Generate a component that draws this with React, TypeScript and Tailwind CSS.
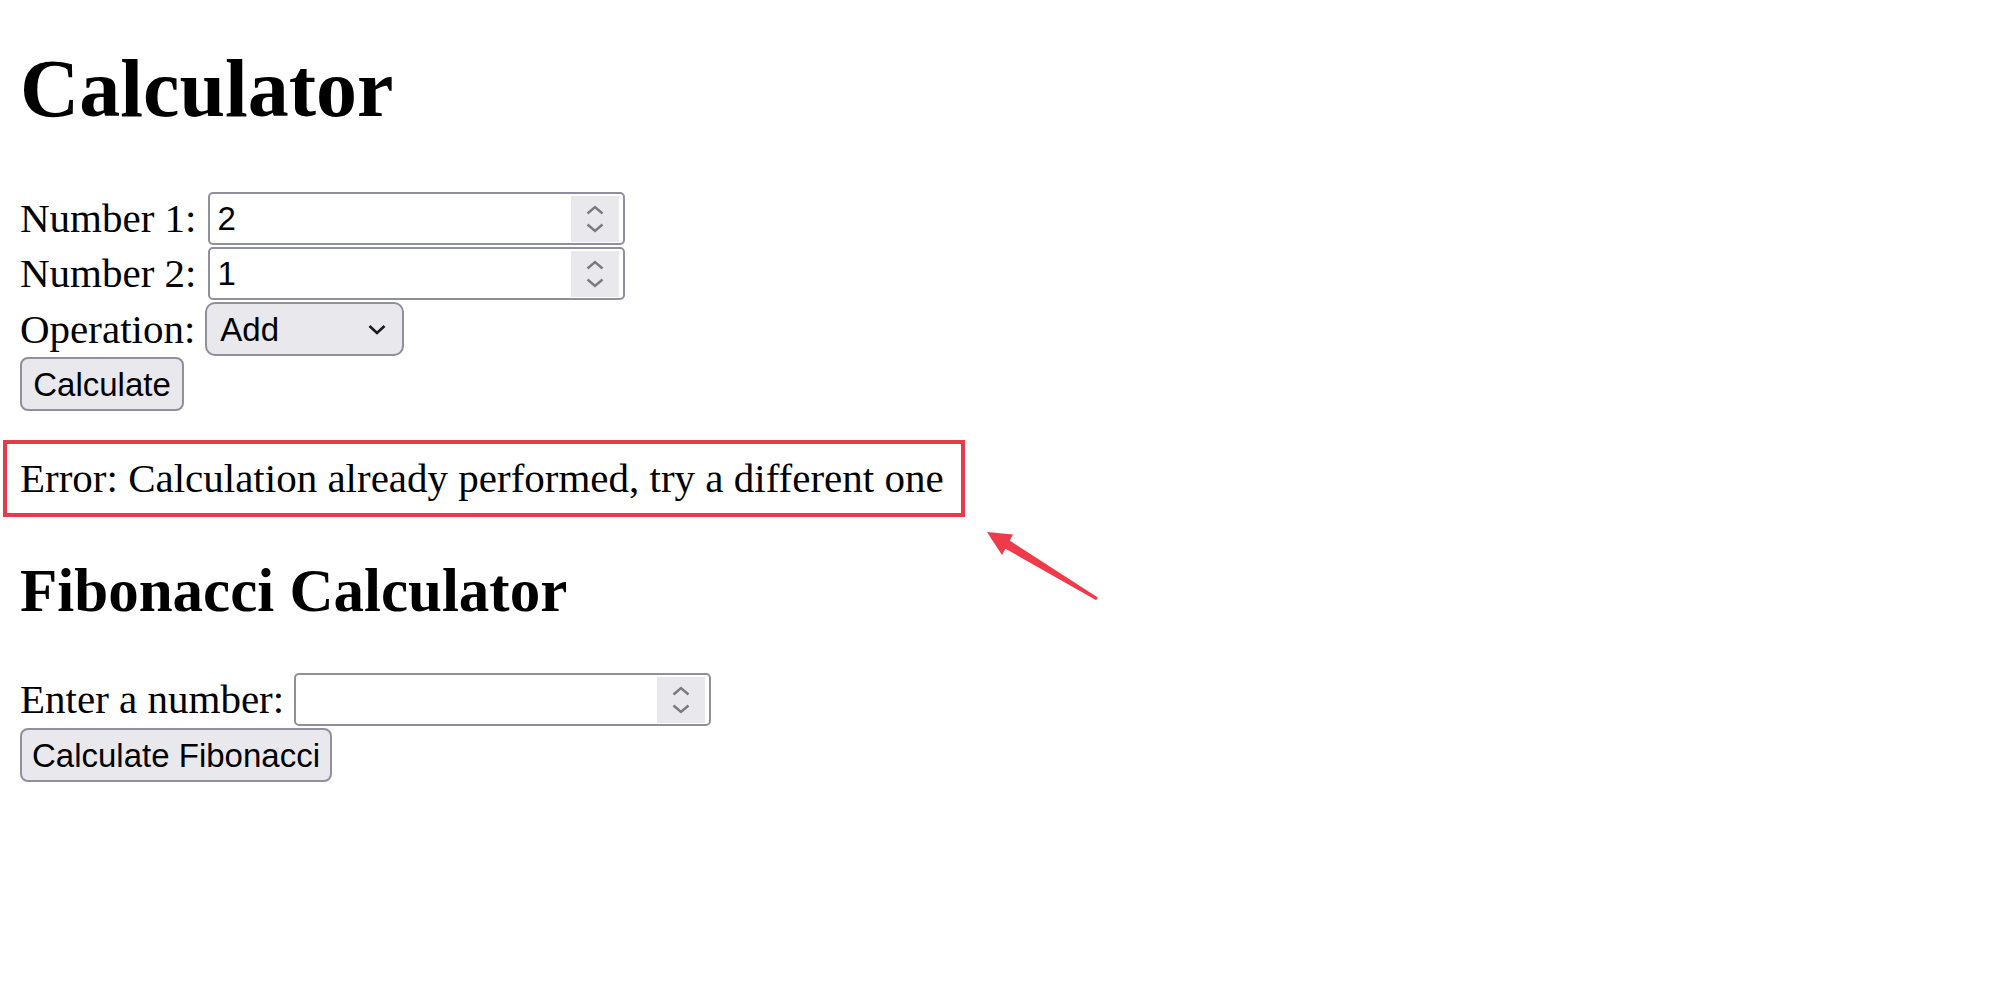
import React, { useState } from 'react';

const serif = "font-['Liberation_Serif','Times_New_Roman',serif]";
const sans = "font-['Liberation_Sans',Arial,sans-serif]";

function Spinner() {
  return (
    <div className="flex h-[46px] w-[48px] shrink-0 flex-col items-center justify-center gap-[8px] bg-[#e9e9ed]">
      <svg width="20" height="10" viewBox="0 0 20 10" fill="none" stroke="#7a7a7a" strokeWidth="2.4">
        <path d="M2.5 8.5 L10 2 L17.5 8.5" />
      </svg>
      <svg width="20" height="10" viewBox="0 0 20 10" fill="none" stroke="#7a7a7a" strokeWidth="2.4">
        <path d="M2.5 1.5 L10 8 L17.5 1.5" />
      </svg>
    </div>
  );
}

function NumberField({ value, onChange }: { value: string; onChange: (v: string) => void }) {
  return (
    <div className="flex h-[53px] w-[417px] items-center rounded-[5px] border-2 border-[#8f8f9d] bg-white pl-[8px] pr-[4px]">
      <input
        type="text"
        inputMode="numeric"
        value={value}
        onChange={(e) => onChange(e.target.value)}
        className={`${sans} min-w-0 flex-1 bg-transparent text-[33px] text-black outline-none`}
      />
      <Spinner />
    </div>
  );
}

function PlainButton({ children, width }: { children: React.ReactNode; width: string }) {
  return (
    <button
      className={`${sans} ${width} h-[54px] rounded-[8px] border-2 border-[#8f8f9d] bg-[#e9e9ed] text-[33px] leading-none text-black`}
    >
      {children}
    </button>
  );
}

export default function App() {
  const [num1, setNum1] = useState('2');
  const [num2, setNum2] = useState('1');
  const [fib, setFib] = useState('');

  return (
    <div className={`${serif} relative min-h-[988px] w-full bg-white text-black`}>
      <div className="px-5 pb-5 pt-[1px]">
        <h1 className="mb-[56px] mt-[41px] text-[82px] font-bold leading-[94px]">Calculator</h1>

        <div className="text-[41px] leading-[47px]">
          <div className="mb-[2px] flex items-center gap-[11px]">
            <label>Number 1:</label>
            <NumberField value={num1} onChange={setNum1} />
          </div>
          <div className="mb-[2px] flex items-center gap-[11px]">
            <label>Number 2:</label>
            <NumberField value={num2} onChange={setNum2} />
          </div>
          <div className="mb-[1px] flex items-center gap-[10px]">
            <label>Operation:</label>
            <div className="relative">
              <select
                className={`${sans} h-[54px] w-[199px] appearance-none rounded-[10px] border-2 border-[#8f8f9d] bg-[#e9e9ed] pl-[13px] text-[33px] text-black outline-none`}
                defaultValue="add"
              >
                <option value="add">Add</option>
                <option value="subtract">Subtract</option>
                <option value="multiply">Multiply</option>
                <option value="divide">Divide</option>
              </select>
              <svg
                className="pointer-events-none absolute right-[17px] top-[22px]"
                width="20"
                height="11"
                viewBox="0 0 20 11"
                fill="none"
                stroke="#1a1a1a"
                strokeWidth="2.6"
              >
                <path d="M2.5 2 L10 9 L17.5 2" />
              </svg>
            </div>
          </div>
          <PlainButton width="w-[164px]">Calculate</PlainButton>

          <div className="relative my-[40px]">
            <p className="py-[4px]">Error: Calculation already performed, try a different one</p>
            <div className="pointer-events-none absolute -bottom-[11px] -left-[17px] -top-[11px] w-[962px] border-[4px] border-[#e93a4c]" />
          </div>

          <h2 className="mb-[47px] mt-[50px] text-[61px] font-bold leading-[70px]">Fibonacci Calculator</h2>

          <div className="mb-[2px] flex items-center gap-[10px]">
            <label>Enter a number:</label>
            <NumberField value={fib} onChange={setFib} />
          </div>
          <PlainButton width="w-[312px]">Calculate Fibonacci</PlainButton>
        </div>
      </div>

      <svg className="pointer-events-none absolute left-0 top-0" width="1999" height="988" viewBox="0 0 1999 988">
        <polygon points="1001.5,546.5 1006.5,538.5 1097.8,597.6 1096.2,600.2" fill="#ef3a4c" strokeLinejoin="round" />
        <polygon points="987,532 1013,534.5 1002,555" fill="#ef3a4c" />
      </svg>
    </div>
  );
}
